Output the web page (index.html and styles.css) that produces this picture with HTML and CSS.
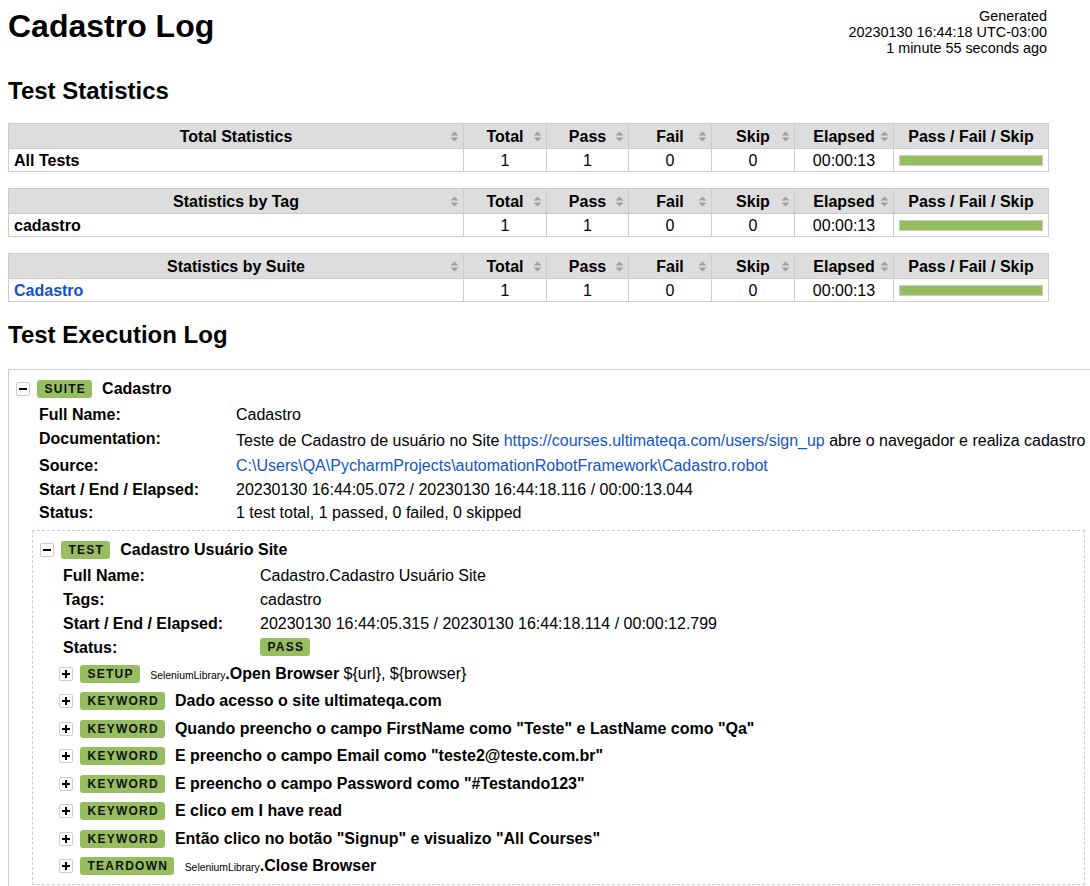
FILE: index.html
```html
<!DOCTYPE html>
<html lang="pt">
<head>
<meta charset="utf-8">
<title>Cadastro Log</title>
<link rel="stylesheet" href="styles.css">
</head>
<body>
<header class="top">
  <h1>Cadastro Log</h1>
  <div class="generated">Generated<br>20230130 16:44:18 UTC-03:00<br>1 minute 55 seconds ago</div>
</header>

<h2 class="first">Test Statistics</h2>
<div class="stats-group">
  <table class="stats">
    <colgroup><col class="c-name"><col class="c-total"><col class="c-pass"><col class="c-fail"><col class="c-skip"><col class="c-elapsed"><col class="c-graph"></colgroup>
    <thead><tr>
      <th>Total Statistics<svg class="sort" viewBox="0 0 9 11" width="9" height="11"><path d="M0.5 4.5L4.5 0.5L8.5 4.5ZM0.5 6.5L4.5 10.5L8.5 6.5Z"/></svg></th>
      <th>Total<svg class="sort" viewBox="0 0 9 11" width="9" height="11"><path d="M0.5 4.5L4.5 0.5L8.5 4.5ZM0.5 6.5L4.5 10.5L8.5 6.5Z"/></svg></th>
      <th>Pass<svg class="sort" viewBox="0 0 9 11" width="9" height="11"><path d="M0.5 4.5L4.5 0.5L8.5 4.5ZM0.5 6.5L4.5 10.5L8.5 6.5Z"/></svg></th>
      <th>Fail<svg class="sort" viewBox="0 0 9 11" width="9" height="11"><path d="M0.5 4.5L4.5 0.5L8.5 4.5ZM0.5 6.5L4.5 10.5L8.5 6.5Z"/></svg></th>
      <th>Skip<svg class="sort" viewBox="0 0 9 11" width="9" height="11"><path d="M0.5 4.5L4.5 0.5L8.5 4.5ZM0.5 6.5L4.5 10.5L8.5 6.5Z"/></svg></th>
      <th>Elapsed<svg class="sort" viewBox="0 0 9 11" width="9" height="11"><path d="M0.5 4.5L4.5 0.5L8.5 4.5ZM0.5 6.5L4.5 10.5L8.5 6.5Z"/></svg></th>
      <th>Pass / Fail / Skip</th>
    </tr></thead>
    <tbody><tr>
      <td class="name">All Tests</td><td>1</td><td>1</td><td>0</td><td>0</td><td>00:00:13</td>
      <td class="graph"><div class="bar"><div class="bar-pass" style="width:100%"></div></div></td>
    </tr></tbody>
  </table>

  <table class="stats">
    <colgroup><col class="c-name"><col class="c-total"><col class="c-pass"><col class="c-fail"><col class="c-skip"><col class="c-elapsed"><col class="c-graph"></colgroup>
    <thead><tr>
      <th>Statistics by Tag<svg class="sort" viewBox="0 0 9 11" width="9" height="11"><path d="M0.5 4.5L4.5 0.5L8.5 4.5ZM0.5 6.5L4.5 10.5L8.5 6.5Z"/></svg></th>
      <th>Total<svg class="sort" viewBox="0 0 9 11" width="9" height="11"><path d="M0.5 4.5L4.5 0.5L8.5 4.5ZM0.5 6.5L4.5 10.5L8.5 6.5Z"/></svg></th>
      <th>Pass<svg class="sort" viewBox="0 0 9 11" width="9" height="11"><path d="M0.5 4.5L4.5 0.5L8.5 4.5ZM0.5 6.5L4.5 10.5L8.5 6.5Z"/></svg></th>
      <th>Fail<svg class="sort" viewBox="0 0 9 11" width="9" height="11"><path d="M0.5 4.5L4.5 0.5L8.5 4.5ZM0.5 6.5L4.5 10.5L8.5 6.5Z"/></svg></th>
      <th>Skip<svg class="sort" viewBox="0 0 9 11" width="9" height="11"><path d="M0.5 4.5L4.5 0.5L8.5 4.5ZM0.5 6.5L4.5 10.5L8.5 6.5Z"/></svg></th>
      <th>Elapsed<svg class="sort" viewBox="0 0 9 11" width="9" height="11"><path d="M0.5 4.5L4.5 0.5L8.5 4.5ZM0.5 6.5L4.5 10.5L8.5 6.5Z"/></svg></th>
      <th>Pass / Fail / Skip</th>
    </tr></thead>
    <tbody><tr>
      <td class="name">cadastro</td><td>1</td><td>1</td><td>0</td><td>0</td><td>00:00:13</td>
      <td class="graph"><div class="bar"><div class="bar-pass" style="width:100%"></div></div></td>
    </tr></tbody>
  </table>

  <table class="stats">
    <colgroup><col class="c-name"><col class="c-total"><col class="c-pass"><col class="c-fail"><col class="c-skip"><col class="c-elapsed"><col class="c-graph"></colgroup>
    <thead><tr>
      <th>Statistics by Suite<svg class="sort" viewBox="0 0 9 11" width="9" height="11"><path d="M0.5 4.5L4.5 0.5L8.5 4.5ZM0.5 6.5L4.5 10.5L8.5 6.5Z"/></svg></th>
      <th>Total<svg class="sort" viewBox="0 0 9 11" width="9" height="11"><path d="M0.5 4.5L4.5 0.5L8.5 4.5ZM0.5 6.5L4.5 10.5L8.5 6.5Z"/></svg></th>
      <th>Pass<svg class="sort" viewBox="0 0 9 11" width="9" height="11"><path d="M0.5 4.5L4.5 0.5L8.5 4.5ZM0.5 6.5L4.5 10.5L8.5 6.5Z"/></svg></th>
      <th>Fail<svg class="sort" viewBox="0 0 9 11" width="9" height="11"><path d="M0.5 4.5L4.5 0.5L8.5 4.5ZM0.5 6.5L4.5 10.5L8.5 6.5Z"/></svg></th>
      <th>Skip<svg class="sort" viewBox="0 0 9 11" width="9" height="11"><path d="M0.5 4.5L4.5 0.5L8.5 4.5ZM0.5 6.5L4.5 10.5L8.5 6.5Z"/></svg></th>
      <th>Elapsed<svg class="sort" viewBox="0 0 9 11" width="9" height="11"><path d="M0.5 4.5L4.5 0.5L8.5 4.5ZM0.5 6.5L4.5 10.5L8.5 6.5Z"/></svg></th>
      <th>Pass / Fail / Skip</th>
    </tr></thead>
    <tbody><tr>
      <td class="name"><a href="#">Cadastro</a></td><td>1</td><td>1</td><td>0</td><td>0</td><td>00:00:13</td>
      <td class="graph"><div class="bar"><div class="bar-pass" style="width:100%"></div></div></td>
    </tr></tbody>
  </table>
</div>

<h2 class="second">Test Execution Log</h2>
<section class="suite">
  <div class="el-header">
    <span class="toggle"><svg viewBox="0 0 8 8" width="8" height="8"><path d="M0 3h8v2H0z"/></svg></span>
    <span class="label">SUITE</span>
    <span class="el-name">Cadastro</span>
  </div>
  <dl class="meta">
    <dt>Full Name:</dt><dd>Cadastro</dd>
    <dt>Documentation:</dt><dd class="doc">Teste de Cadastro de usuário no Site <a href="#">https://courses.ultimateqa.com/users/sign_up</a> abre o navegador e realiza cadastro</dd>
    <dt>Source:</dt><dd><a href="#">C:\Users\QA\PycharmProjects\automationRobotFramework\Cadastro.robot</a></dd>
    <dt class="tight">Start / End / Elapsed:</dt><dd class="tight">20230130 16:44:05.072 / 20230130 16:44:18.116 / 00:00:13.044</dd>
    <dt class="tight">Status:</dt><dd class="tight">1 test total, 1 passed, 0 failed, 0 skipped</dd>
  </dl>

  <section class="test">
    <div class="el-header">
      <span class="toggle"><svg viewBox="0 0 8 8" width="8" height="8"><path d="M0 3h8v2H0z"/></svg></span>
      <span class="label">TEST</span>
      <span class="el-name">Cadastro Usuário Site</span>
    </div>
    <dl class="meta">
      <dt>Full Name:</dt><dd>Cadastro.Cadastro Usuário Site</dd>
      <dt>Tags:</dt><dd>cadastro</dd>
      <dt>Start / End / Elapsed:</dt><dd>20230130 16:44:05.315 / 20230130 16:44:18.114 / 00:00:12.799</dd>
      <dt>Status:</dt><dd class="status"><span class="label">PASS</span></dd>
    </dl>

    <div class="keywords">
      <div class="el-header kw">
        <span class="toggle"><svg viewBox="0 0 8 8" width="8" height="8"><path d="M0 3h8v2H0zM3 0h2v8H3z"/></svg></span>
        <span class="label">SETUP</span>
        <span class="el-name lib"><span class="lib-name">SeleniumLibrary</span>.Open Browser <span class="args">${url}, ${browser}</span></span>
      </div>
      <div class="el-header kw">
        <span class="toggle"><svg viewBox="0 0 8 8" width="8" height="8"><path d="M0 3h8v2H0zM3 0h2v8H3z"/></svg></span>
        <span class="label">KEYWORD</span>
        <span class="el-name">Dado acesso o site ultimateqa.com</span>
      </div>
      <div class="el-header kw">
        <span class="toggle"><svg viewBox="0 0 8 8" width="8" height="8"><path d="M0 3h8v2H0zM3 0h2v8H3z"/></svg></span>
        <span class="label">KEYWORD</span>
        <span class="el-name">Quando preencho o campo FirstName como "Teste" e LastName como "Qa"</span>
      </div>
      <div class="el-header kw">
        <span class="toggle"><svg viewBox="0 0 8 8" width="8" height="8"><path d="M0 3h8v2H0zM3 0h2v8H3z"/></svg></span>
        <span class="label">KEYWORD</span>
        <span class="el-name">E preencho o campo Email como "teste2@teste.com.br"</span>
      </div>
      <div class="el-header kw">
        <span class="toggle"><svg viewBox="0 0 8 8" width="8" height="8"><path d="M0 3h8v2H0zM3 0h2v8H3z"/></svg></span>
        <span class="label">KEYWORD</span>
        <span class="el-name">E preencho o campo Password como "#Testando123"</span>
      </div>
      <div class="el-header kw">
        <span class="toggle"><svg viewBox="0 0 8 8" width="8" height="8"><path d="M0 3h8v2H0zM3 0h2v8H3z"/></svg></span>
        <span class="label">KEYWORD</span>
        <span class="el-name">E clico em I have read</span>
      </div>
      <div class="el-header kw">
        <span class="toggle"><svg viewBox="0 0 8 8" width="8" height="8"><path d="M0 3h8v2H0zM3 0h2v8H3z"/></svg></span>
        <span class="label">KEYWORD</span>
        <span class="el-name">Então clico no botão "Signup" e visualizo "All Courses"</span>
      </div>
      <div class="el-header kw">
        <span class="toggle"><svg viewBox="0 0 8 8" width="8" height="8"><path d="M0 3h8v2H0zM3 0h2v8H3z"/></svg></span>
        <span class="label">TEARDOWN</span>
        <span class="el-name lib"><span class="lib-name">SeleniumLibrary</span>.Close Browser</span>
      </div>
    </div>
  </section>
</section>
</body>
</html>
```

FILE: styles.css
```css
* { box-sizing: border-box; }

html {
  scrollbar-width: none;
}
html::-webkit-scrollbar { display: none; }

body {
  margin: 0;
  padding: 8px;
  font-family: "Liberation Sans", Arial, Helvetica, sans-serif;
  font-size: 16px;
  color: #000;
  background: #fff;
}

a { color: #15c; text-decoration: none; }

.top {
  width: 1039px;
  display: flex;
  justify-content: space-between;
  align-items: flex-start;
}

h1 {
  margin: 0;
  font-size: 32px;
  line-height: 37px;
  font-weight: bold;
}

.generated {
  font-size: 14.4px;
  line-height: 16px;
  text-align: right;
  white-space: nowrap;
}

h2 {
  font-size: 24px;
  line-height: 28px;
  font-weight: bold;
}

h2.first { margin: 21px 0 18px; }
h2.second { margin: 19px 0 20px; }

/* statistics */
.stats-group {
  display: flex;
  flex-direction: column;
  gap: 16px;
}

table.stats {
  width: 1040px;
  border-collapse: collapse;
  table-layout: fixed;
  border: 1px solid #ccc;
}

.c-name { width: 455px; }
.c-total { width: 83px; }
.c-pass { width: 82px; }
.c-fail { width: 83px; }
.c-skip { width: 83px; }
.c-elapsed { width: 99px; }
.c-graph { width: 155px; }

.stats th,
.stats td {
  border: 1px solid #ccc;
  padding: 0 5px;
  text-align: center;
  white-space: nowrap;
  line-height: 19px;
}

.stats th {
  background: #ddd;
  height: 25px;
  font-weight: bold;
  position: relative;
}

.stats td { height: 23px; }

.stats td.name {
  text-align: left;
  font-weight: bold;
}

.sort {
  position: absolute;
  right: 4px;
  top: 50%;
  margin-top: -5.5px;
  fill: #a0a0a0;
}

.stats td.graph { padding: 0 5px; }

.bar {
  height: 11px;
  border: 1px solid #ccc;
  background: #fff;
}

.bar-pass {
  height: 100%;
  background: #97bd61;
}

/* execution log */
.suite {
  width: max-content;
  border: 1px solid #ccc;
  padding: 10px 100px 40px 7px;
}

.test {
  margin: 6px 0 0 16px;
  border: 1px dashed #ccc;
  padding: 10px 0 4px 7px;
}

.el-header {
  display: flex;
  align-items: center;
  height: 18px;
  white-space: nowrap;
}

.toggle {
  width: 14px;
  height: 14px;
  border: 1px solid #ccc;
  border-radius: 2px;
  background: #fff;
  display: flex;
  align-items: center;
  justify-content: center;
  margin-right: 7px;
  flex: none;
}

.toggle svg { display: block; fill: #000; }

.label {
  display: inline-block;
  font-size: 12px;
  font-weight: bold;
  letter-spacing: 1.25px;
  height: 18px;
  line-height: 18px;
  padding: 0 6px 0 7.5px;
  border-radius: 3px;
  background: #97bd61;
  color: #111;
}

.el-name {
  font-weight: bold;
  margin-left: 10px;
}

.lib { margin-left: 10.5px; }

.lib-name {
  font-size: 10.4px;
  font-weight: normal;
}

.args { font-weight: normal; }

.meta {
  display: grid;
  grid-template-columns: 197px max-content;
  margin: 4.5px 0 0 23px;
  white-space: nowrap;
}

.meta dt {
  font-weight: bold;
  padding: 2.5px 0;
  line-height: 19px;
}

.meta dd {
  margin: 0;
  padding: 2.5px 0;
  line-height: 19px;
}

.meta .tight { padding: 2px 0; }

.meta dd.doc { padding: 4.5px 0 3.5px; }

.meta dd.status { padding: 3px 0; }
.meta dd.status .label { display: block; width: max-content; }

.keywords { margin: 1px 0 0 19px; }

.el-header.kw {
  height: auto;
  padding: 4.75px 0;
}

.kw .label { flex: none; }
```
